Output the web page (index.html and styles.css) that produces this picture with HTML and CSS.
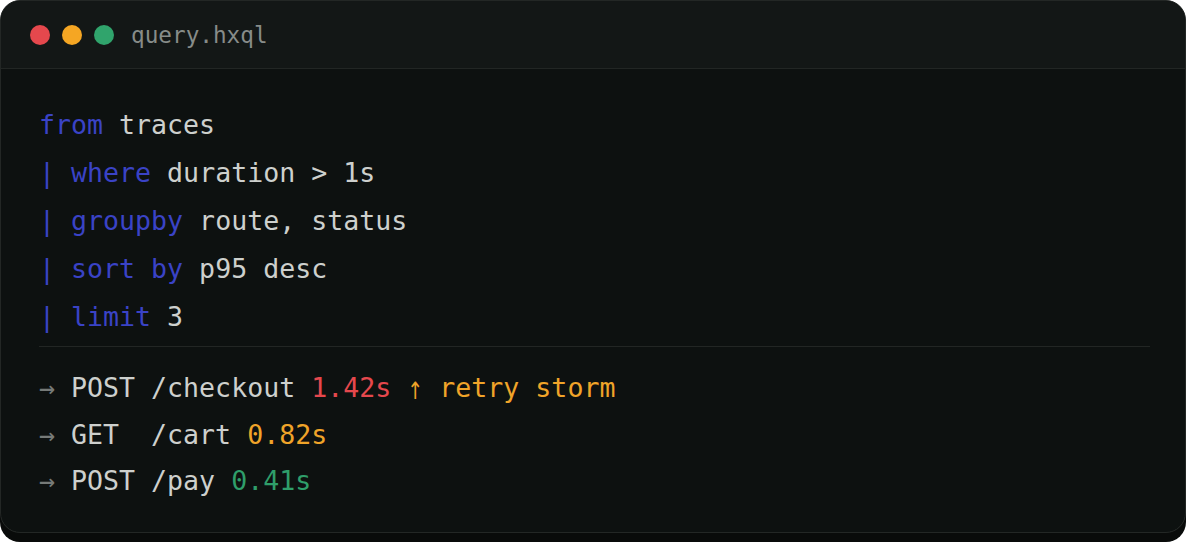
FILE: index.html
```html
<!DOCTYPE html>
<html lang="en">
<head>
<meta charset="utf-8">
<title>query.hxql</title>
<link rel="stylesheet" href="styles.css">
</head>
<body>
  <div class="window">
    <div class="titlebar">
      <span class="dot dot-red"></span>
      <span class="dot dot-orange"></span>
      <span class="dot dot-green"></span>
      <span class="title">query.hxql</span>
    </div>
    <div class="content">
      <div class="query">
        <div class="line"><span class="kw">from</span> traces</div>
        <div class="line"><span class="kw">|</span> <span class="kw">where</span> duration &gt; 1s</div>
        <div class="line"><span class="kw">|</span> <span class="kw">groupby</span> route, status</div>
        <div class="line"><span class="kw">|</span> <span class="kw">sort by</span> p95 desc</div>
        <div class="line"><span class="kw">|</span> <span class="kw">limit</span> 3</div>
      </div>
      <div class="results">
        <div class="row"><span class="arrow">→</span> POST /checkout <span class="red">1.42s</span> <span class="orange"><span class="up">↑</span> retry storm</span></div>
        <div class="row"><span class="arrow">→</span> GET&nbsp; /cart <span class="orange">0.82s</span></div>
        <div class="row"><span class="arrow">→</span> POST /pay <span class="green">0.41s</span></div>
      </div>
    </div>
  </div>
</body>
</html>
```

FILE: styles.css
```css
html, body {
  margin: 0;
  padding: 0;
  background: #ffffff;
}

body {
  height: 542px;
  font-family: "DejaVu Sans Mono", "Liberation Mono", monospace;
}

.window {
  box-sizing: border-box;
  width: 1186px;
  height: 533px;
  background: #0d1110;
  border: 1px solid #232725;
  border-radius: 20px;
  box-shadow: 0 9px 0 0 #090b0a;
  overflow: hidden;
}

.titlebar {
  display: flex;
  align-items: center;
  height: 67px;
  padding-left: 29px;
  background: #131716;
  border-bottom: 1px solid #222624;
  gap: 12px;
}

.dot {
  width: 20px;
  height: 20px;
  border-radius: 50%;
  flex: none;
}

.dot-red { background: #e5484d; }
.dot-orange { background: #f5a623; }
.dot-green { background: #30a46c; }

.title {
  margin-left: 5px;
  font-size: 22.7px;
  color: #878c89;
}

.content {
  padding: 32px 35px 0 38px;
  font-size: 26.6px;
  color: #cdd0cd;
}

.query {
  padding-bottom: 5px;
  border-bottom: 1px solid #222624;
}

.line {
  height: 48px;
  line-height: 48px;
  white-space: pre;
}

.kw {
  color: #3a43c6;
}

.results {
  padding-top: 18px;
}

.row {
  height: 46.5px;
  line-height: 46.5px;
  white-space: pre;
}

.arrow {
  color: #767a78;
}

.up {
  display: inline-block;
  width: 16px;
  text-align: center;
  font-family: "DejaVu Sans", sans-serif;
  font-size: 19px;
  transform: scaleY(1.25);
}

.red { color: #e5484d; }
.orange { color: #f0a429; }
.green { color: #2f9e6a; }
```
